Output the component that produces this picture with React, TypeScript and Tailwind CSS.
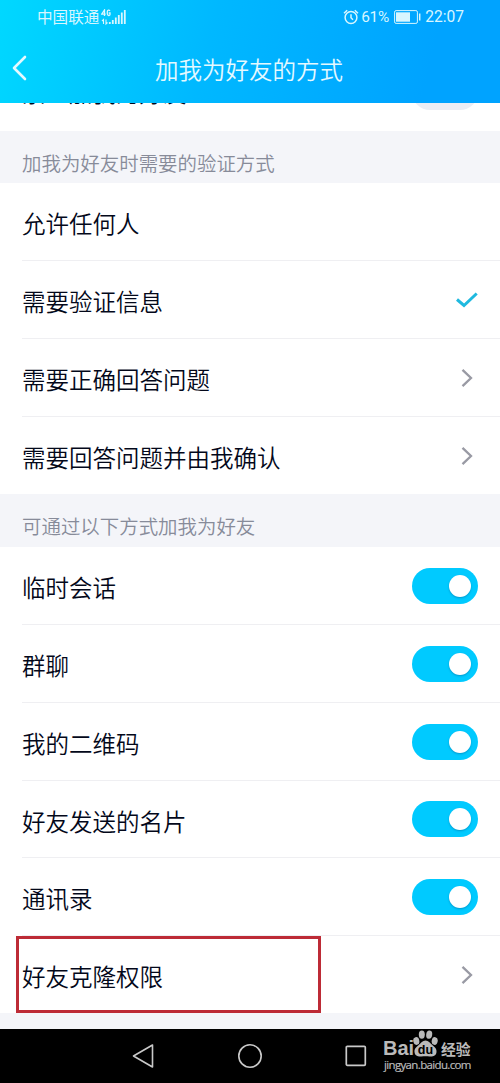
import type { ReactNode } from "react";

function Chevron() {
  return (
    <svg className="mr-[5px] mt-px h-5 w-3" viewBox="0 0 12 20" fill="none" stroke="#999aa4" strokeWidth="2.3">
      <path d="M1.500 1.800 10 10 1.500 18.200" />
    </svg>
  );
}

function Check() {
  return (
    <svg className="h-[18px] w-[22px]" viewBox="0 0 22 18" fill="none" stroke="#1fb9df" strokeWidth="3">
      <path d="M1 8.500 8 14.500 20.700 2.500" />
    </svg>
  );
}

function Toggle() {
  return (
    <div className="flex h-9 w-[66px] items-center justify-end rounded-full bg-[#00caff] pr-[7px]">
      <div className="size-[22px] rounded-full bg-white shadow-[0_1px_2px_rgba(0,60,110,0.35)]" />
    </div>
  );
}

function Row({ label, children, last }: { label: string; children?: ReactNode; last?: boolean }) {
  return (
    <div className="pl-[22px]">
      <div className={`flex h-full items-center justify-between pr-[22px] ${last ? "" : "border-b border-[#efeff2]"}`}>
        <span className="mt-[3px] text-[23.5px] leading-8 whitespace-nowrap text-[#03081a]">{label}</span>
        {children}
      </div>
    </div>
  );
}

function SectionTitle({ text }: { text: string }) {
  return <div className="bg-[#f4f5f9] pt-[18px] pl-[22px] text-[19.45px] leading-7 text-[#878b99]">{text}</div>;
}

function StatusBar() {
  return (
    <div className="flex h-[34px] items-center pr-[36px] pl-[37px] font-normal text-[#d8f6ff]">
      <span className="-mt-[2px] text-[15.6px] leading-6">中国联通</span>
      <svg className="ml-[2px] h-[17px] w-[25px]" viewBox="0 0 25 17" fill="none" stroke="currentColor">
        <path d="M3.500 7V1L.7 5.200h4M9 1.800C8.200.8 6.300.8 6.300 3v1.500C6.300 7 9 7 9 5.500V4H7.700" strokeWidth="1.300" />
        <path d="M2.500 15v-4.500L1 12M5 10.500V15l1.500-1.500" strokeWidth="1.100" />
        <path d="M8.800 15v-2M11.800 15v-4M14.800 15V8.500M17.800 15V6M20.800 15V3.500M23.800 15V1" strokeWidth="1.800" />
      </svg>
      <div className="ml-auto flex items-center">
        <svg className="mr-[2px] size-[16px]" viewBox="0 0 16 16" fill="none" stroke="currentColor" strokeWidth="1.500">
          <circle cx="8" cy="8.500" r="5.900" />
          <path d="M8 5.300v3.500l2 2M1 4.300 4.200 1.300M15 4.300l-3.200-3" />
        </svg>
        <span className="w-[28px] font-['Roboto',sans-serif] text-[15.4px] leading-6 tracking-[-0.2px]">61%</span>
        <svg className="mr-[4px] ml-[5px] h-[14px] w-[27px]" viewBox="0 0 27 14">
          <rect x=".6" y=".6" width="22.800" height="12.800" rx="1.500" fill="none" stroke="currentColor" strokeWidth="1" />
          <rect x="2" y="2.300" width="14" height="9.400" fill="currentColor" />
          <path d="M25.700 3.500v7" stroke="currentColor" strokeWidth="1.500" />
        </svg>
        <span className="font-['Roboto',sans-serif] text-[15.6px] leading-6">22:07</span>
      </div>
    </div>
  );
}

function Watermark() {
  return (
    <div className="absolute top-0 left-[383px] w-[92px] font-normal text-[#bababa]">
      <div className="flex h-[28px] items-end">
        <span className="-mb-[2px] w-[30px] font-['Liberation_Sans',sans-serif] text-[20px] leading-[22px] font-bold">Bai</span>
        <svg className="h-[27px] w-[25px] shrink-0" viewBox="0 0 25 27" fill="currentColor">
          <ellipse cx="3.300" cy="11" rx="3" ry="3.900" transform="rotate(-12 3.300 11)" />
          <ellipse cx="8.800" cy="4.600" rx="3" ry="4.200" />
          <ellipse cx="16.200" cy="4.600" rx="3" ry="4.200" transform="rotate(8 16.200 4.600)" />
          <ellipse cx="21.700" cy="11" rx="3" ry="3.900" transform="rotate(10 21.700 11)" />
          <path d="M12.500 10.500c3 0 4.500 2.500 6.800 4.500s4.500 3.500 4.200 7c-.4 4-4 5-7 4.500-2-.4-6-.4-8 0-3 .5-6.600-.5-7-4.500-.3-3.500 1.900-5 4.200-7s3.800-4.500 6.800-4.500Z" />
          <text x="12.500" y="24.300" textAnchor="middle" fill="#000" fontFamily="Liberation Sans" fontWeight="bold" fontSize="12.500">du</text>
        </svg>
        <span className="-mb-px ml-[3px] text-[14.8px] leading-[18px] font-bold whitespace-nowrap">经验</span>
      </div>
      <svg className="mt-[2px] ml-px block h-[14px] w-[89px] overflow-visible font-['Open_Sans',sans-serif] text-[11.5px]" viewBox="0 0 89 14">
        <text x="0" y="10" textLength="87.500" fill="currentColor" stroke="currentColor" strokeWidth=".2">jingyan.baidu.com</text>
      </svg>
    </div>
  );
}

export default function App() {
  return (
    <div className="flex h-[1083px] w-[500px] flex-col overflow-hidden bg-white font-['Noto_Sans_CJK_SC',sans-serif] font-[350]">
      <header className="h-[103px] shrink-0 bg-[linear-gradient(104deg,#00d8ff_0%,#00b8ff_42%,#00a3ff_85%)]">
        <StatusBar />
        <div className="grid h-[69px] grid-cols-[50px_1fr_50px] items-center text-[#e4f9ff]">
          <svg className="-mt-[2px] ml-3 h-[26px] w-[15px]" viewBox="0 0 15 26" fill="none" stroke="currentColor" strokeWidth="2.600" strokeLinecap="round" strokeLinejoin="round">
            <path d="M13 2 2 13l11 11" />
          </svg>
          <h1 className="pr-[2px] text-center text-[23.5px] leading-8">加我为好友的方式</h1>
        </div>
      </header>

      <div className="flex h-[28px] shrink-0 items-start justify-between overflow-hidden pr-[22px] pl-[22px]">
        <span className="-mt-[27px] text-[23.5px] leading-8 text-[#03081a]">禁止加我为好友</span>
        <div className="-mt-[29px] h-9 w-[66px] shrink-0 rounded-full bg-[#ebedf5]" />
      </div>

      <section className="grid h-[363px] shrink-0 grid-rows-[52px_311px]">
        <SectionTitle text="加我为好友时需要的验证方式" />
        <div className="grid grid-rows-[78px_78px_78px_77px]">
          <Row label="允许任何人" />
          <Row label="需要验证信息"><Check /></Row>
          <Row label="需要正确回答问题"><Chevron /></Row>
          <Row label="需要回答问题并由我确认" last><Chevron /></Row>
        </div>
      </section>

      <section className="grid h-[519px] shrink-0 grid-rows-[53px_466px]">
        <SectionTitle text="可通过以下方式加我为好友" />
        <div className="relative grid grid-rows-[78px_78px_78px_77px_78px_77px]">
          <Row label="临时会话"><Toggle /></Row>
          <Row label="群聊"><Toggle /></Row>
          <Row label="我的二维码"><Toggle /></Row>
          <Row label="好友发送的名片"><Toggle /></Row>
          <Row label="通讯录"><Toggle /></Row>
          <Row label="好友克隆权限" last><Chevron /></Row>
          <div className="absolute bottom-0 left-4 h-[77px] w-[305px] border-[3px] border-[#bd2b36]" />
        </div>
      </section>

      <div className="h-4 shrink-0 bg-[#f4f5f9]" />

      <nav className="relative flex h-[54px] shrink-0 items-center bg-black pl-[132px] text-[#c9c9c9]">
        <svg className="size-6" viewBox="0 0 24 24" fill="none" stroke="currentColor" strokeWidth="1.600" strokeLinejoin="round">
          <path d="M20.500 1v22L1.500 12Z" />
        </svg>
        <svg className="ml-[81px] size-[26px]" viewBox="0 0 26 26" fill="none" stroke="currentColor" strokeWidth="1.600">
          <circle cx="13" cy="13" r="11.200" />
        </svg>
        <svg className="ml-[82px] size-[22px]" viewBox="0 0 22 22" fill="none" stroke="currentColor" strokeWidth="1.700">
          <rect x="1.300" y="1.300" width="19" height="19" rx="1" />
        </svg>
        <Watermark />
      </nav>
    </div>
  );
}
